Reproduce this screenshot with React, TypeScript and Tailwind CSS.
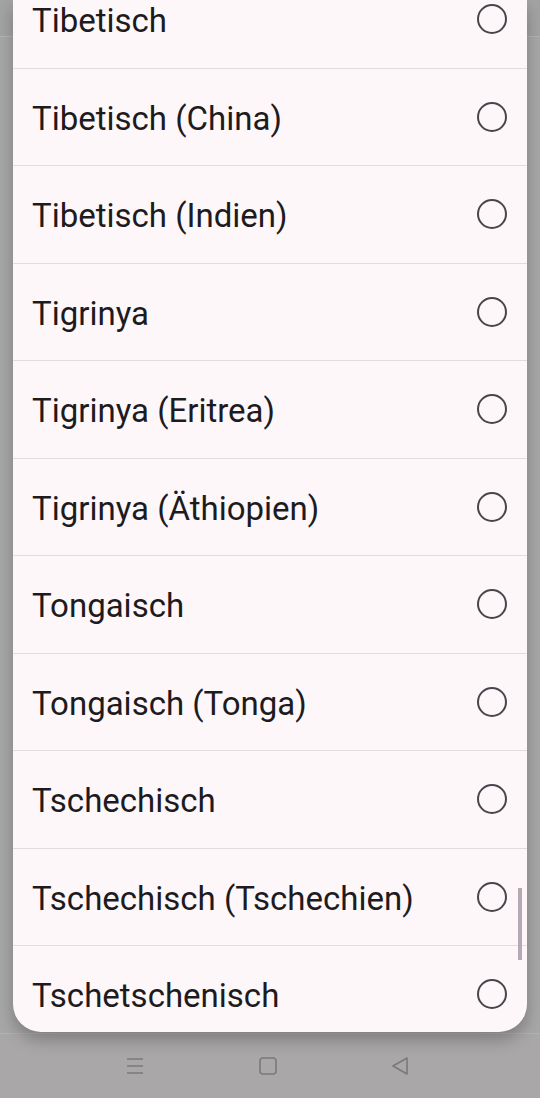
const ITEMS = [
  "Tibetisch",
  "Tibetisch (China)",
  "Tibetisch (Indien)",
  "Tigrinya",
  "Tigrinya (Eritrea)",
  "Tigrinya (Äthiopien)",
  "Tongaisch",
  "Tongaisch (Tonga)",
  "Tschechisch",
  "Tschechisch (Tschechien)",
  "Tschetschenisch",
];

function Radio() {
  return (
    <span className="block h-[30px] w-[30px] shrink-0 rounded-full border-[2.5px] border-[#49454c]" />
  );
}

export default function App() {
  return (
    <div
      className="relative flex h-[1098px] w-[540px] flex-col overflow-hidden bg-[#a8a7a7]"
      style={{ fontFamily: "Roboto, 'Noto Sans', sans-serif" }}
    >
      <div className="h-[37px] border-b border-[#b4b3b3] bg-[#a4a3a3]" />
      <div className="flex-1" />
      <div className="flex h-[65px] items-center gap-[112px] border-t border-[#b3b1b2] bg-[#aaa7a8] pb-[1px] pl-[124px]">
        <svg width="22" height="20" viewBox="0 0 22 20">
          <path d="M3 3h16M3 10h16M3 17h16" stroke="#7c797a" strokeWidth="1.6" />
        </svg>
        <svg width="20" height="20" viewBox="0 0 20 20">
          <rect x="2" y="2" width="16" height="16" rx="3" fill="none" stroke="#7c797a" strokeWidth="1.6" />
        </svg>
        <svg width="20" height="20" viewBox="0 0 20 20">
          <path d="M17 2L3 10l14 8z" fill="none" stroke="#7c797a" strokeWidth="1.6" strokeLinejoin="round" />
        </svg>
      </div>

      <div className="absolute left-[13px] top-0 h-[1032px] w-[514px] overflow-hidden rounded-b-[28px] bg-[#fdf7f9] shadow-[0_8px_16px_rgba(0,0,0,0.25)]">
        <div className="-mt-[29px] flex flex-col">
          {ITEMS.map((name) => (
            <div
              key={name}
              className="flex h-[97.5px] shrink-0 items-center justify-between border-b border-[#e2dcdf] pl-[19px] pr-[20px]"
            >
              <span className="pt-[3px] text-[33px] leading-none text-[#1d1b1e]">{name}</span>
              <Radio />
            </div>
          ))}
        </div>
        <div className="absolute right-[5px] top-[888px] h-[72px] w-[4px] bg-[#b3abb1]" />
      </div>
    </div>
  );
}
